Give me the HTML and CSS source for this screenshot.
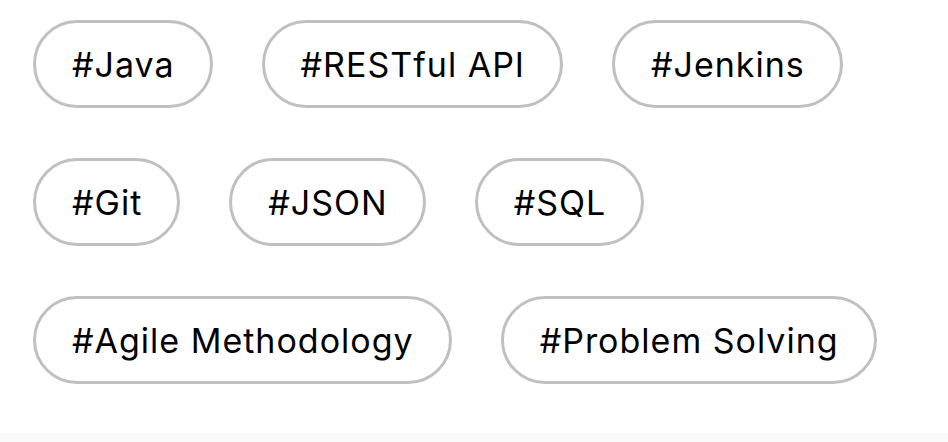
FILE: index.html
```html
<!DOCTYPE html>
<html>
<head>
<meta charset="utf-8">
<link rel="stylesheet" href="styles.css">
</head>
<body>
<div class="page">
  <div class="tags">
    <span class="tag">#Java</span>
    <span class="tag">#RESTful API</span>
    <span class="tag">#Jenkins</span>
    <span class="tag">#Git</span>
    <span class="tag">#JSON</span>
    <span class="tag">#SQL</span>
    <span class="tag">#Agile Methodology</span>
    <span class="tag">#Problem Solving</span>
  </div>
  <div class="footer"></div>
</div>
</body>
</html>
```
FILE: styles.css
```css
html, body {
  margin: 0;
  padding: 0;
  background: #ffffff;
}
.page {
  width: 948px;
  height: 442px;
  display: flex;
  flex-direction: column;
  overflow: hidden;
}
.tags {
  flex: 1;
  display: flex;
  flex-wrap: wrap;
  align-content: flex-start;
  gap: 50px 49px;
  padding: 20px 0 0 33px;
}
.tag {
  display: inline-flex;
  align-items: center;
  box-sizing: border-box;
  height: 88px;
  padding: 0 35px 0 36px;
  border: 3px solid #c0c0c0;
  border-radius: 44px;
  font-family: Inter, "Noto Sans", sans-serif;
  font-size: 34px;
  letter-spacing: 1px;
  color: #000000;
  white-space: nowrap;
}
.footer {
  height: 9px;
  background: #fafafa;
}
```
